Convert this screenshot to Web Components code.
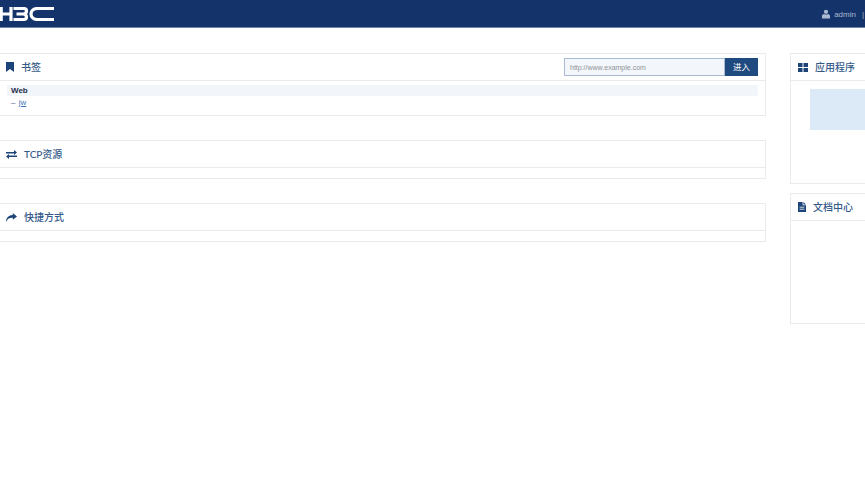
<!DOCTYPE html>
<html lang="zh"><head><meta charset="utf-8"><title>H3C</title>
<style>
html,body{margin:0;padding:0;background:#fff;overflow:hidden;height:492px;width:865px}
body{font-family:"Liberation Sans","Noto Sans CJK SC",sans-serif}
app-shell{width:865px;height:492px}
.left{display:flex;flex-direction:column;gap:24px;width:767px;margin-left:-1px;flex:none}
.right{display:flex;flex-direction:column;gap:9px;width:74px;flex:none}
</style></head><body>
<template id="t-panel"><style>
:host{display:block;box-sizing:border-box;width:var(--panel-w,auto);border:1px solid #ebebeb;background:#fff}
.head{height:26px;border-bottom:1px solid #ebebeb;display:flex;align-items:center;justify-content:space-between;padding-left:var(--head-pad,6px);padding-right:7px}
.title{display:flex;align-items:center;gap:var(--title-gap,7px);color:#345a8a;font-size:10px;font-weight:500;font-family:"Lato","Noto Sans CJK SC",sans-serif;white-space:nowrap}
.ico{display:flex;width:var(--ico-w,14px);justify-content:center}
.txt{display:block;margin-bottom:2px}
.body{height:var(--body-h,10px);display:flow-root}
</style><div class="head"><div class="title"><span class="ico"><slot name="icon"></slot></span><span class="txt"><slot name="title"></slot></span></div><slot name="tool"></slot></div><div class="body"><slot></slot></div></template>

<app-shell>
  <div class="left" slot="left">
    <ui-panel style="--ico-w:8px;--head-pad:6px;--title-gap:7px;--body-h:34px">
      <svg slot="icon" width="8" height="10" viewBox="0 0 8 10"><path d="M0 0h8v10L4 7 0 10z" fill="#1d4478"/></svg>
      <span slot="title">书签</span>
      <url-box slot="tool"></url-box>
      <bookmark-list></bookmark-list>
    </ui-panel>
    <ui-panel style="--ico-w:11px;--head-pad:6px;--title-gap:7px">
      <svg slot="icon" width="11" height="9" viewBox="0 0 11 9" fill="#1d4478"><path d="M0 2h8V0l3 2.600L8 5V3.400H0z"/><path d="M11 5.600H3V4L0 6.500 3 9V7h8z"/></svg>
      <span slot="title">TCP资源</span>
    </ui-panel>
    <ui-panel style="--ico-w:11px;--head-pad:6px;--title-gap:7px">
      <svg slot="icon" width="11" height="9" viewBox="0 0 11 9"><path d="M6.800 0L11 3.400 6.800 6.800V4.700C3.800 4.600 1.600 5.400 0 9 .1 4.600 2.600 2.200 6.800 2z" fill="#1d4478"/></svg>
      <span slot="title">快捷方式</span>
    </ui-panel>
  </div>
  <div class="right" slot="right">
    <ui-panel style="--panel-w:120px;--ico-w:10px;--head-pad:7px;--title-gap:7px;--body-h:102px">
      <svg slot="icon" width="10" height="9" viewBox="0 0 10 9" fill="#1d4478"><rect width="4.500" height="4"/><rect x="5.500" width="4.500" height="4"/><rect y="5" width="4.500" height="4"/><rect x="5.500" y="5" width="4.500" height="4"/></svg>
      <span slot="title">应用程序</span>
      <app-tile></app-tile>
    </ui-panel>
    <ui-panel style="--panel-w:120px;--ico-w:8px;--head-pad:7px;--title-gap:7px;--body-h:102px">
      <svg slot="icon" width="8" height="10" viewBox="0 0 8 10"><path d="M0 0h4.600v3.200H8V10H0z" fill="#1d4478"/><path d="M5.400 0L8 2.500H5.400z" fill="#1d4478"/><path d="M1.600 5.200h4.800M1.600 7.200h4.800" stroke="#fff" stroke-width=".8"/></svg>
      <span slot="title">文档中心</span>
    </ui-panel>
  </div>
</app-shell>

<script>
function def(name, html){
  customElements.define(name, class extends HTMLElement{
    constructor(){super();this.attachShadow({mode:'open'}).innerHTML=html;}
  });
}
customElements.define('ui-panel', class extends HTMLElement{
  constructor(){super();this.attachShadow({mode:'open'}).appendChild(document.getElementById('t-panel').content.cloneNode(true));}
});
def('app-header',`<style>
:host{display:flex;align-items:center;justify-content:space-between;height:27px;background:#14336a;border-bottom:1px solid #6f86a8}
.logo{display:block}
.user{display:flex;align-items:center;color:#a9b9d2;font-size:8px;font-family:"Liberation Sans",sans-serif;padding-right:1px}
.user svg{margin-right:4px}
.user span{margin-top:1px}
.sep{margin-left:6px}
</style>
<svg class="logo" width="54" height="14" viewBox="0 0 54 14" fill="none" stroke="#fff" stroke-width="3.200">
<path d="M1.200 0v14M11 0v14M1 7h10"/>
<path d="M13.500 1.500h10c2.500 0 3 1 3 2.400s-1 2.900-3.200 3.100H16.500M23.300 7c2.500.2 3.200 1.300 3.200 3s-.8 2.500-3 2.500h-10"/>
<path d="M54 1.500H38c-4.500 0-7 2.300-7 5.500s2.500 5.500 7 5.500h16"/>
</svg>
<div class="user"><svg width="8" height="10" viewBox="0 0 9 10" fill="#a9b9d2"><circle cx="4.500" cy="2.500" r="2.400"/><path d="M0 10V7.500C0 6 1 5.200 2.300 5c1.300.8 3 .8 4.400 0C8 5.200 9 6 9 7.500V10z"/></svg><span>admin</span><span class="sep">|</span></div>`);
def('url-box',`<style>
:host{display:flex;height:18px}
.in{height:16px;width:154px;border:1px solid #a9bbd2;background:#f3f6fa;color:#8f9399;font-size:7px;line-height:17px;padding-left:5px}
.btn{width:33px;background:#1f4a80;color:#fff;font-size:8.500px;text-align:center;line-height:16px;font-family:"Noto Sans CJK SC",sans-serif}
</style><div class="in">http://www.example.com</div><div class="btn">进入</div>`);
def('bookmark-list',`<style>
:host{display:block;padding:4px 7px 0 7px;font-size:8px;font-family:"Liberation Sans",sans-serif}
.g{height:11px;line-height:11px;background:#f2f6fa;font-weight:bold;color:#1d2f4a;padding-left:4px}
.i{height:12px;line-height:13px;color:#4a5a70;padding-left:4px}
a{color:#3f78b5;text-decoration:underline;margin-left:1px}
</style><div class="g">Web</div><div class="i">– <a href="#">jw</a></div>`);
def('app-tile',`<style>
:host{display:block;width:56px;height:41px;margin:8px 0 0 19px;background:#dceaf7}
</style>`);
customElements.define('app-shell', class extends HTMLElement{
  constructor(){super();this.attachShadow({mode:'open'}).innerHTML=`<style>
:host{display:block}
.main{display:flex;gap:24px;padding-top:25px;align-items:flex-start}
</style><app-header></app-header><div class="main"><slot name="left"></slot><slot name="right"></slot></div>`;}
});
</script>
</body></html>
